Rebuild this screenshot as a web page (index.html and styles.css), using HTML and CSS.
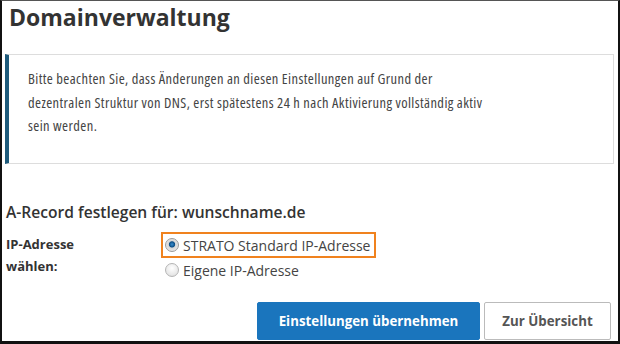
FILE: index.html
```html
<!DOCTYPE html>
<html lang="de">
<head>
    <meta charset="UTF-8">
    <title>Domainverwaltung</title>
    <link rel="stylesheet" href="styles.css">
</head>
<body>
    <div class="frame">
        <h1>Domainverwaltung</h1>

        <div class="notice">
            <p>Bitte beachten Sie, dass Änderungen an diesen Einstellungen auf Grund der
            dezentralen Struktur von DNS, erst spätestens 24 h nach Aktivierung vollständig aktiv
            sein werden.</p>
        </div>

        <h2>A-Record festlegen für: wunschname.de</h2>

        <div class="form-row">
            <div class="form-label">IP-Adresse<br>wählen:</div>
            <div class="options">
                <label class="option highlighted">
                    <span class="radio checked"></span>
                    STRATO Standard IP-Adresse
                </label>
                <label class="option">
                    <span class="radio"></span>
                    Eigene IP-Adresse
                </label>
            </div>
        </div>

        <div class="actions">
            <button class="btn btn-primary">Einstellungen übernehmen</button>
            <button class="btn btn-secondary">Zur Übersicht</button>
        </div>
    </div>
</body>
</html>
```

FILE: styles.css
```css
html, body {
    margin: 0;
    padding: 0;
    background: white;
}

body {
    font-family: 'Open Sans', 'Liberation Sans', sans-serif;
    color: #444;
    width: 620px;
    height: 344px;
    overflow: hidden;
}

.frame {
    box-sizing: border-box;
    width: 620px;
    height: 344px;
    border-top: 1px solid #555;
    border-left: 2px solid #111;
    border-right: 2px solid #111;
    border-bottom: 3px solid #111;
    padding: 0 4px 0 3px;
}

h1 {
    margin: 0;
    padding: 0 0 0 4px;
    font-size: 23px;
    line-height: 33px;
    font-weight: 700;
    color: #333;
}

.notice {
    margin-top: 20px;
    height: 110px;
    box-sizing: border-box;
    border: 1px solid #ddd;
    border-left: 4px solid #1d5a7b;
    padding: 12px 20px 0 19px;
    font-size: 14.5px;
    font-stretch: condensed;
    letter-spacing: 0.4px;
    line-height: 23.5px;
    color: #444;
}

.notice p {
    margin: 0;
    max-width: 468px;
}

h2 {
    margin: 36px 0 0 0;
    padding-left: 1px;
    font-size: 15.6px;
    line-height: 24px;
    font-weight: 600;
    color: #333;
}

.form-row {
    display: flex;
    margin-top: 9px;
}

.form-label {
    width: 155px;
    padding-left: 1px;
    padding-top: 0;
    font-size: 13px;
    line-height: 22px;
    font-weight: 700;
    color: #333;
}

.options {
    display: flex;
    flex-direction: column;
    align-items: flex-start;
}

.option {
    display: flex;
    align-items: center;
    gap: 4px;
    font-size: 14px;
    color: #444;
    height: 20px;
    padding: 1px 4px 1px 2px;
    border: 2px solid transparent;
}

.option.highlighted {
    margin-top: -1px;
    border-color: #f0821e;
}

.option + .option {
    margin-top: -1px;
}

.radio {
    width: 14px;
    height: 14px;
    border-radius: 50%;
    box-sizing: border-box;
    border: 1px solid #b5b5b5;
    background: radial-gradient(circle at 50% 35%, #ffffff 0%, #e6e6e6 70%, #cfcfcf 100%);
}

.radio.checked {
    border-color: #9a9a9a;
    background: radial-gradient(circle at 50% 45%, #3a8fd0 0%, #0d4f86 30%, #d6d6d6 40%, #f4f4f4 100%);
}

.actions {
    display: flex;
    justify-content: flex-end;
    gap: 4px;
    margin-top: 19px;
    padding-right: 3px;
}

.btn {
    font-family: 'Open Sans', 'Liberation Sans', sans-serif;
    font-size: 13.3px;
    font-weight: 700;
    height: 38px;
    border-radius: 2px;
    cursor: pointer;
}

.btn-primary {
    width: 223px;
    background: #1a75bd;
    border: 1px solid #1a75bd;
    color: white;
}

.btn-secondary {
    width: 127px;
    background: white;
    border: 1px solid #bbb;
    color: #555;
}
```
